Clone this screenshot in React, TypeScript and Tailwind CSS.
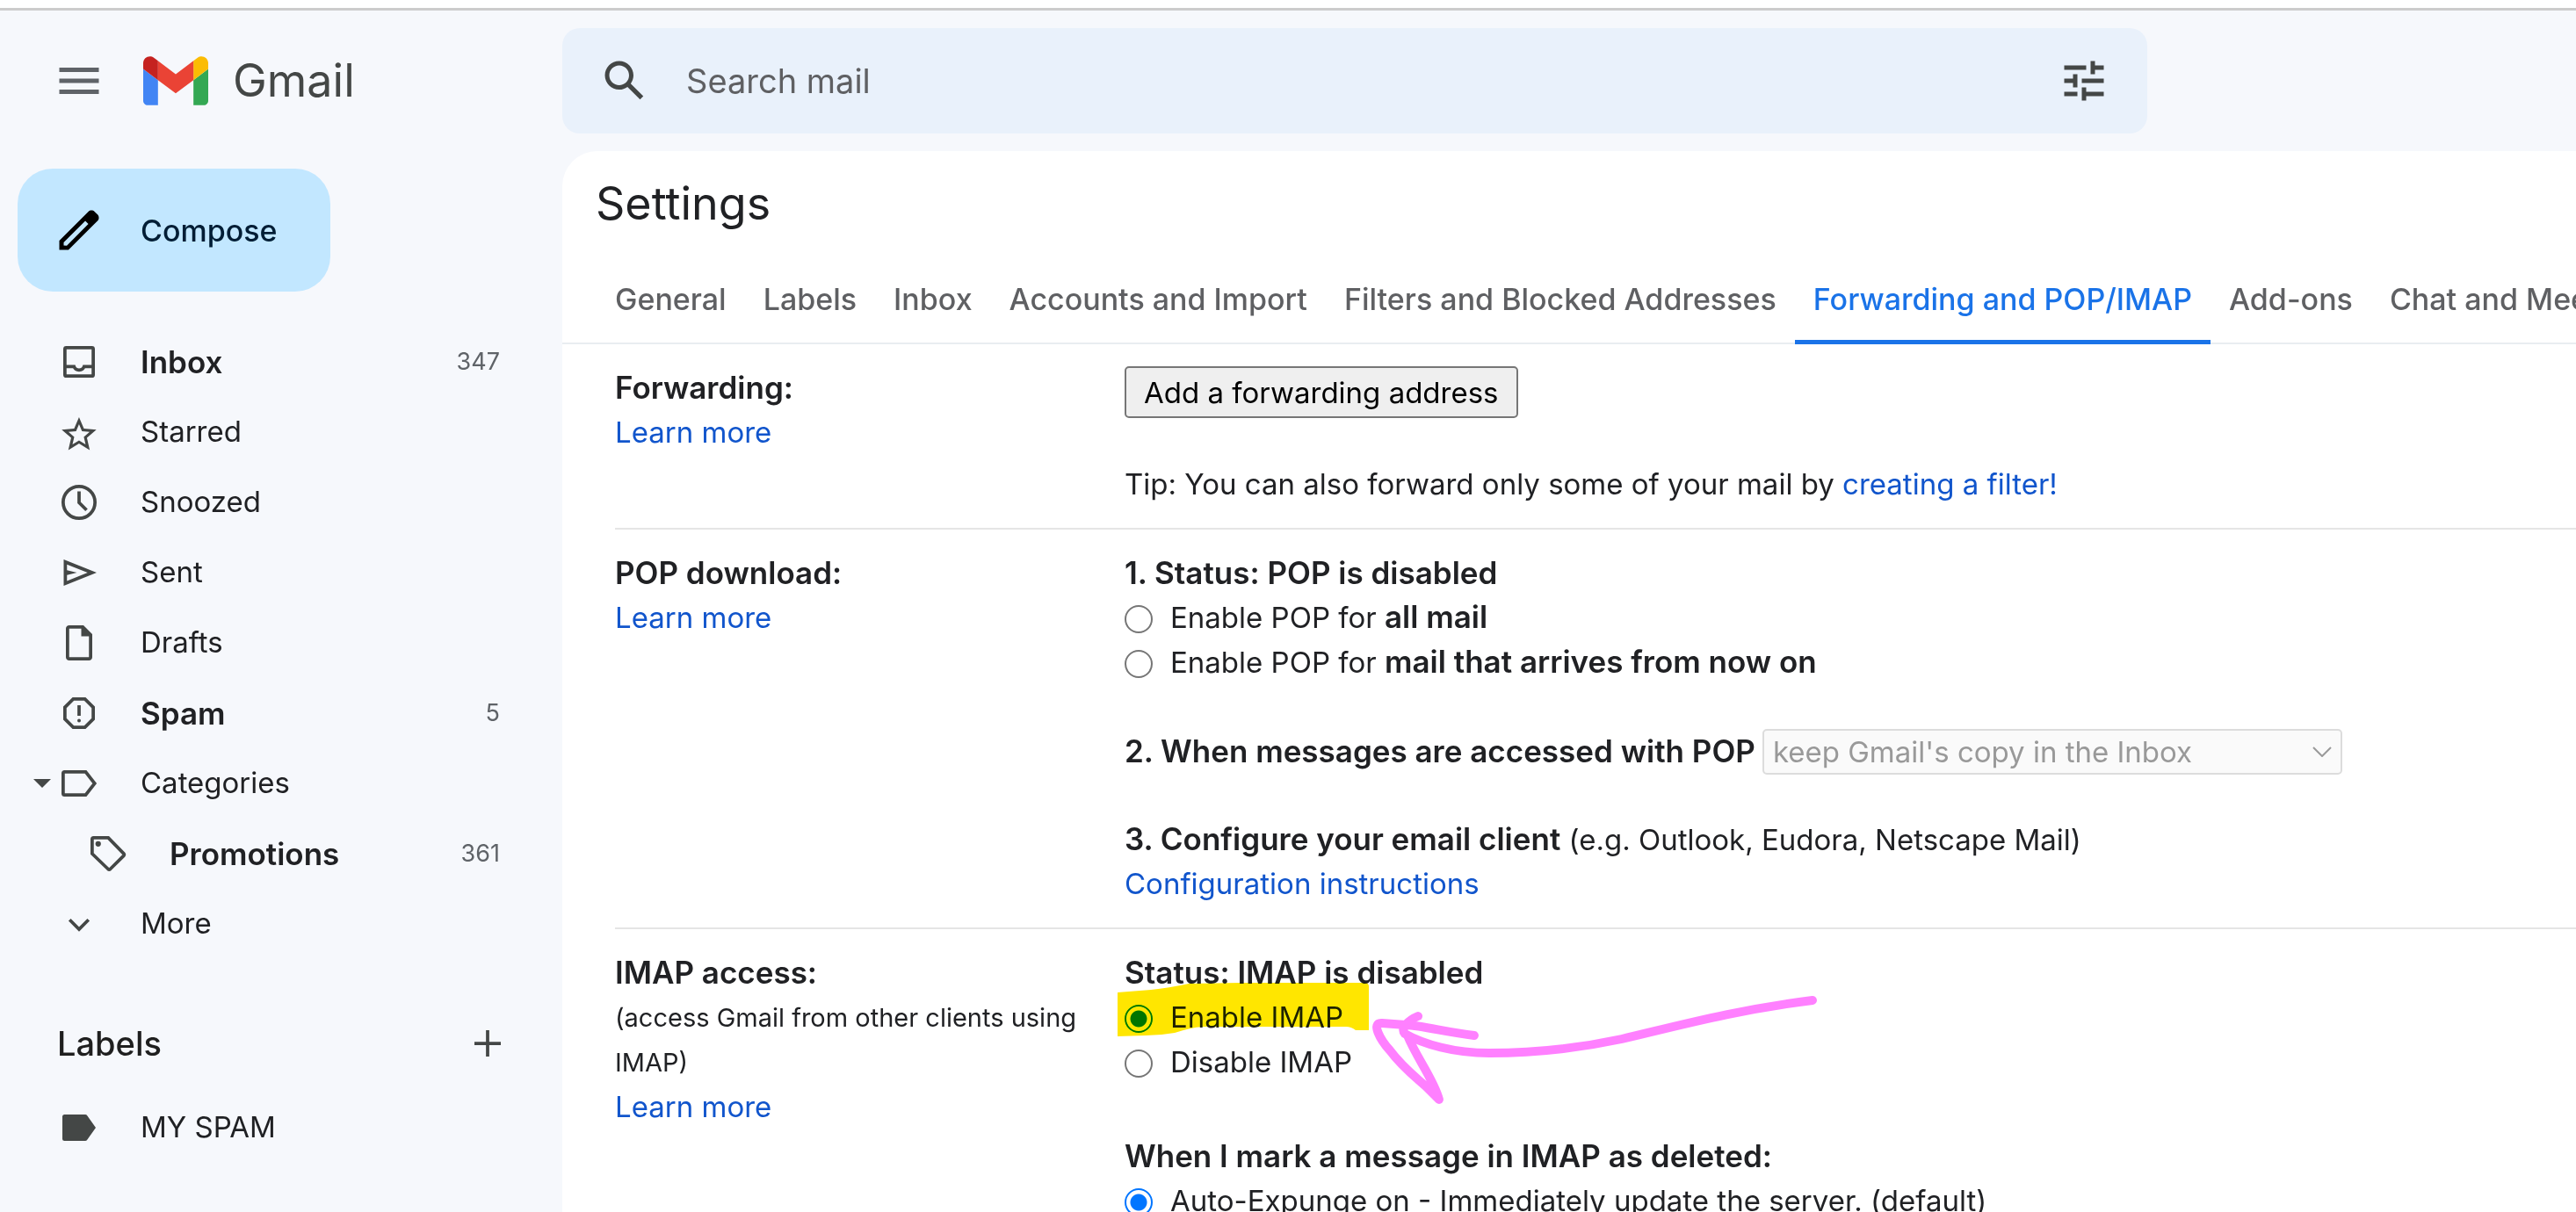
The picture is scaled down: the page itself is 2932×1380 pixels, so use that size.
import type { ReactNode } from "react";

function Icon({ children, solid = false }: { children: ReactNode; solid?: boolean }) {
  return (
    <svg
      viewBox="0 0 20 20"
      aria-hidden="true"
      className="size-[50px] shrink-0 text-[#444746]"
      fill={solid ? "currentColor" : "none"}
      stroke={solid ? "none" : "currentColor"}
      strokeWidth={1.5}
    >
      {children}
    </svg>
  );
}

function LargeIcon({ d }: { d: string }) {
  return (
    <svg viewBox="0 0 24 24" aria-hidden="true" className="size-15 shrink-0" fill="currentColor">
      <path d={d} />
    </svg>
  );
}

function GmailLogo() {
  return (
    <svg viewBox="52 42 88 66" aria-hidden="true" className="h-14 w-[74px]">
      <path fill="#4285f4" d="M58 108h14V74L52 59v43c0 3.32 2.69 6 6 6" />
      <path fill="#34a853" d="M120 108h14c3.32 0 6-2.69 6-6V59l-20 15" />
      <path fill="#fbbc04" d="M120 48v26l20-15v-8c0-7.42-8.47-11.65-14.4-7.2" />
      <path fill="#ea4335" d="M72 74V48l24 18 24-18v26L96 92" />
      <path fill="#c5221f" d="M52 51v8l20 15V48l-5.6-4.2c-5.94-4.45-14.4-.22-14.4 7.2" />
    </svg>
  );
}

type Folder = { name: string; icon: ReactNode; count?: number; unread?: boolean; nested?: boolean; open?: boolean };

const folders: Folder[] = [
  {
    name: "Inbox",
    count: 347,
    unread: true,
    icon: (
      <Icon>
        <rect x="3.55" y="3.55" width="12.9" height="12.9" rx=".6" />
        <path d="M3.5 12.1h4.2c.3.9 1.1 1.6 2.3 1.6s2-.7 2.3-1.6h4.2" />
      </Icon>
    ),
  },
  {
    name: "Starred",
    icon: (
      <Icon solid>
        <path
          transform="translate(.5 1.6) scale(.79)"
          d="M22 9.24l-7.19-.62L12 2 9.19 8.63 2 9.24l5.46 4.73L5.82 21 12 17.27 18.18 21l-1.63-7.03L22 9.24zM12 15.4l-3.76 2.27 1-4.28-3.32-2.88 4.38-.38L12 6.1l1.71 4.04 4.38.38-3.32 2.88 1 4.28L12 15.4z"
        />
      </Icon>
    ),
  },
  {
    name: "Snoozed",
    icon: (
      <Icon>
        <circle cx="10" cy="10" r="7.25" />
        <path d="M10 5v5.1l3.4 3.4" />
      </Icon>
    ),
  },
  {
    name: "Sent",
    icon: (
      <Icon solid>
        <path d="M3 16V4l15 6-15 6Zm1.5-2.25L13.88 10 4.5 6.25v2.63L9 10l-4.5 1.13v2.62Z" />
      </Icon>
    ),
  },
  {
    name: "Drafts",
    icon: (
      <Icon solid>
        <path
          fillRule="evenodd"
          d="M5.5 18q-.62 0-1.06-.44Q4 17.12 4 16.5v-13q0-.62.44-1.06Q4.88 2 5.5 2H12l4 4v10.5q0 .62-.44 1.06-.44.44-1.06.44ZM11 7V3.5H5.5v13h9V7Z"
        />
      </Icon>
    ),
  },
  {
    name: "Spam",
    count: 5,
    unread: true,
    icon: (
      <Icon>
        <path d="M7.35 3.55h5.3l3.8 3.8v5.3l-3.8 3.8h-5.3l-3.8-3.8v-5.3z" />
        <path d="M10 6.4v4.8" />
        <circle cx="10" cy="13.4" r=".8" fill="currentColor" stroke="none" />
      </Icon>
    ),
  },
  {
    name: "Categories",
    open: true,
    icon: (
      <Icon>
        <path d="M3.4 4.75h9.6L17.1 10l-4.1 5.25H3.4q-.65 0-.65-.65V5.4q0-.65.65-.65z" />
      </Icon>
    ),
  },
  {
    name: "Promotions",
    count: 361,
    unread: true,
    nested: true,
    icon: (
      <Icon>
        <path d="M3.4 2.75h6.7l7 7.2q.45.5 0 1L11 17q-.5.45-1 0L2.75 10V3.4q0-.65.65-.65z" />
        <circle cx="5.5" cy="5.5" r="1.25" fill="currentColor" stroke="none" />
      </Icon>
    ),
  },
  {
    name: "More",
    icon: (
      <Icon>
        <path d="M5.7 8.1 10 12.4l4.3-4.3" />
      </Icon>
    ),
  },
];

function FolderRow({ name, icon, count, unread, nested, open }: Folder) {
  return (
    <a href="#" className="flex h-20 items-center pr-[71px]">
      <span className={nested ? "flex w-[98px] shrink-0" : "flex w-[65px] shrink-0 justify-end pr-[7px]"}>
        {open && (
          <svg viewBox="0 0 20 10" aria-hidden="true" className="h-2.5 w-5" fill="#444746">
            <path d="M0 0h20L10 10z" />
          </svg>
        )}
      </span>
      {icon}
      <span className={unread ? "ml-[45px] text-[35px] font-semibold" : "ml-[45px] text-[33px]"}>{name}</span>
      {count !== undefined && <span className="ml-auto text-[27px] text-[#5f6368]">{count}</span>}
    </a>
  );
}

function Sidebar() {
  return (
    <aside className="w-[640px] shrink-0">
      <button
        type="button"
        className="mt-5 ml-5 flex h-[140px] items-center gap-10 rounded-[40px] bg-[#c2e7ff] pr-[60px] pl-10 text-[34px] font-medium text-[#001d35]"
      >
        <span className="text-black">
          <LargeIcon d="M20.41 4.94l-1.35-1.35c-.78-.78-2.05-.78-2.83 0L3 16.82V21h4.18L20.41 7.77c.79-.78.79-2.05 0-2.83zM6.41 19.06L5 19v-1.36l9.82-9.82 1.41 1.41-9.82 9.83z" />
        </span>
        Compose
      </button>
      <nav aria-label="Folders" className="mt-10">
        {folders.map((f) => (
          <FolderRow key={f.name} {...f} />
        ))}
      </nav>
      <div className="mt-14 flex h-20 items-center justify-between pr-[60px] pl-[65px]">
        <h2 className="text-[38px] font-medium text-[#1f1f1f]">Labels</h2>
        <button type="button" aria-label="Create new label">
          <Icon>
            <path d="M10 4v12M4 10h12" />
          </Icon>
        </button>
      </div>
      <div className="mt-4">
        <FolderRow
          name="MY SPAM"
          icon={
            <Icon solid>
              <path d="M3.4 4h9.4q.6 0 .9.5L17.6 10l-3.9 5.5q-.3.5-.9.5H3.4q-1 0-1-1V5q0-1 1-1z" />
            </Icon>
          }
        />
      </div>
    </aside>
  );
}

function Header() {
  return (
    <header className="flex h-40 shrink-0 items-center">
      <div className="flex w-[640px] shrink-0 items-center pl-15">
        <button type="button" aria-label="Main menu" className="text-[#5f6368]">
          <LargeIcon d="M3 18h18v-2H3v2zm0-5h18v-2H3v2zm0-7v2h18V6H3z" />
        </button>
        <a href="#" className="ml-[43px] flex items-center gap-7">
          <GmailLogo />
          <span className="text-[52px] leading-14 text-[#444746]">Gmail</span>
        </a>
      </div>
      <form
        role="search"
        className="mr-[488px] flex h-30 flex-1 items-center rounded-[20px] bg-[#e9f1fb] pr-[42px] pl-[41px] text-[#444746]"
      >
        <button type="button" aria-label="Search">
          <LargeIcon d="M20.49 19l-5.73-5.73C15.53 12.2 16 10.91 16 9.5 16 5.91 13.09 3 9.5 3S3 5.91 3 9.5 5.91 16 9.5 16c1.41 0 2.7-.47 3.77-1.24L19 20.49 20.49 19zM5 9.5C5 7.01 7.01 5 9.5 5S14 7.01 14 9.5 11.99 14 9.5 14 5 11.99 5 9.5z" />
        </button>
        <input
          type="text"
          aria-label="Search mail"
          placeholder="Search mail"
          className="ml-10 min-w-0 flex-1 bg-transparent text-[38px] outline-none placeholder:text-[#5f6063]"
        />
        <button type="button" aria-label="Show search options">
          <LargeIcon d="M3 17v2h6v-2H3zM3 5v2h10V5H3zm10 16v-2h8v-2h-8v-2h-2v6h2zM7 9v2H3v2h4v2h2V9H7zm14 4v-2H11v2h10zm-6-4h2V7h4V5h-4V3h-2v6z" />
        </button>
      </form>
    </header>
  );
}

const tabs = [
  "General",
  "Labels",
  "Inbox",
  "Accounts and Import",
  "Filters and Blocked Addresses",
  "Forwarding and POP/IMAP",
  "Add-ons",
  "Chat and Meet",
];
const activeTab = "Forwarding and POP/IMAP";

function Tabs() {
  return (
    <nav aria-label="Settings" className="mt-10 flex overflow-hidden pl-[39px] shadow-[inset_0_-2px_0_#e9edf1]">
      {tabs.map((t) => (
        <a
          key={t}
          href="#"
          className={
            t === activeTab
              ? "shrink-0 border-b-5 border-[#1a73e8] px-[21px] pt-4 pb-[21px] text-[34px] leading-[50px] font-medium whitespace-nowrap text-[#1a73e8]"
              : "shrink-0 border-b-5 border-transparent px-[21px] pt-4 pb-[21px] text-[34px] leading-[50px] font-medium whitespace-nowrap text-[#5f6063]"
          }
        >
          {t}
        </a>
      ))}
    </nav>
  );
}

function Link({ children }: { children: ReactNode }) {
  return (
    <a href="#" className="text-[#1155cc]">
      {children}
    </a>
  );
}

function Strong({ children }: { children: ReactNode }) {
  return <b className="text-[35px] leading-10 font-semibold">{children}</b>;
}

function Row({ title, note, children }: { title: string; note?: string; children: ReactNode }) {
  return (
    <section className="flex border-b-2 border-[#e5e5e5] py-[25px] last:border-b-0">
      <div className="w-[580px] shrink-0 pr-5">
        <h3>
          <Strong>{title}</Strong>
        </h3>
        {note && <p className="text-[29px] leading-[51px]">{note}</p>}
        <p>
          <Link>Learn more</Link>
        </p>
      </div>
      <div className="relative flex-1 whitespace-nowrap">{children}</div>
    </section>
  );
}

function Radio({ name, checked, children }: { name: string; checked?: boolean; children: ReactNode }) {
  return (
    <label className="flex h-[51px] items-start gap-5">
      <input
        type="radio"
        name={name}
        defaultChecked={checked}
        className="mt-[11px] size-8 shrink-0 appearance-none rounded-full border-2 border-[#767676] checked:border-[#0075ff] checked:bg-[radial-gradient(circle,#0075ff_9px,transparent_10px)]"
      />
      <span>{children}</span>
    </label>
  );
}

/* Highlighter mark and hand-drawn arrow pointing at "Enable IMAP". */
function Annotation() {
  return (
    <>
      <svg
        viewBox="0 0 290 62"
        aria-hidden="true"
        className="pointer-events-none absolute top-9 -left-2.5 h-[62px] w-[290px] mix-blend-darken"
      >
        <path
          fill="#ffe600"
          d="M2 11L40 8Q60 6 83 1L143 0H283Q288 0 288 4V54H273Q268 50 262 50H99Q85 51 67 57Q50 60 34 60L2 61Z"
        />
      </svg>
      <svg
        viewBox="0 0 810 160"
        aria-hidden="true"
        className="pointer-events-none absolute top-9 -left-2.5 h-40 w-[810px]"
        fill="none"
        stroke="#ff80ff"
        strokeWidth={10}
        strokeLinecap="round"
        strokeLinejoin="round"
      >
        <path d="M793 20C705 31 640 49 576 64C520 76 470 80 425 80C385 80 350 70 329 58C324 52 332 43 344 38" />
        <path d="M408 60C375 56 350 49 330 48L303 46C290 45 301 65 312 77C326 96 342 108 354 119L368 133C362 110 342 85 332 60" />
      </svg>
    </>
  );
}

function Settings() {
  return (
    <main className="min-w-0 flex-1 rounded-tl-[40px] bg-white pt-8">
      <h1 className="pl-[38px] text-[52px] leading-14">Settings</h1>
      <Tabs />
      <div className="pl-15 text-[33px] leading-[50px]">
        <Row title="Forwarding:">
          <button type="button" className="block h-[59px] rounded-[5px] border-2 border-[#767676] bg-[#efefef] px-5 text-black">
            Add a forwarding address
          </button>
          <p className="mt-[50px]">
            Tip: You can also forward only some of your mail by <Link>creating a filter!</Link>
          </p>
        </Row>

        <Row title="POP download:">
          <p>
            <Strong>1. Status: POP is disabled</Strong>
          </p>
          <Radio name="pop">
            Enable POP for <Strong>all mail</Strong>
          </Radio>
          <Radio name="pop">
            Enable POP for <Strong>mail that arrives from now on</Strong>
          </Radio>
          <div className="mt-[50px] flex h-[51px] items-center gap-2">
            <label htmlFor="pop-action">
              <Strong>2. When messages are accessed with POP</Strong>
            </label>
            <span className="relative">
              <select
                id="pop-action"
                disabled
                className="block h-[52px] w-[660px] appearance-none rounded-[5px] border-2 border-[#dcdcdc] bg-[#fafafa] px-2.5 leading-[46px] text-[#999999]"
              >
                <option>keep Gmail's copy in the Inbox</option>
              </select>
              <svg
                viewBox="0 0 22 12"
                aria-hidden="true"
                className="pointer-events-none absolute top-5 right-3 h-3 w-[22px]"
                fill="none"
                stroke="#999999"
                strokeWidth={2}
              >
                <path d="M1 1l10 10L21 1" />
              </svg>
            </span>
          </div>
          <p className="mt-[50px]">
            <Strong>3. Configure your email client</Strong> (e.g. Outlook, Eudora, Netscape Mail)
          </p>
          <p>
            <Link>Configuration instructions</Link>
          </p>
        </Row>

        <Row title="IMAP access:" note="(access Gmail from other clients using IMAP)">
          <p>
            <Strong>Status: IMAP is disabled</Strong>
          </p>
          <Radio name="imap" checked>
            Enable IMAP
          </Radio>
          <Radio name="imap">Disable IMAP</Radio>
          <p className="mt-[57px]">
            <Strong>When I mark a message in IMAP as deleted:</Strong>
          </p>
          <Radio name="expunge" checked>
            Auto-Expunge on - Immediately update the server. (default)
          </Radio>
          <Annotation />
        </Row>
      </div>
    </main>
  );
}

export default function App() {
  return (
    <div className="flex h-screen flex-col overflow-hidden bg-[#f6f8fc] font-[Inter,sans-serif] text-[#202124]">
      <div className="h-3 shrink-0 border-b-3 border-[#cccccc] bg-white" />
      <Header />
      <div className="flex min-h-0 flex-1">
        <Sidebar />
        <Settings />
      </div>
    </div>
  );
}
